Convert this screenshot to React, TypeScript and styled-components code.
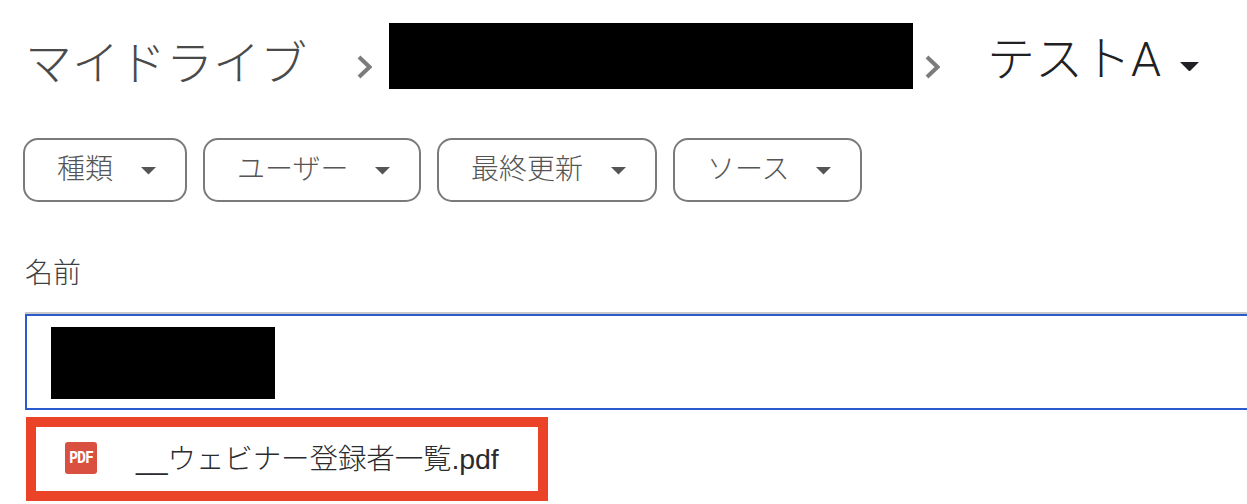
import React from 'react';
import styled, { createGlobalStyle } from 'styled-components';

const GlobalStyle = createGlobalStyle`
  html, body {
    margin: 0;
    padding: 0;
    background: #fff;
    overflow: hidden;
  }
  body {
    font-family: "Noto Sans CJK JP", "Liberation Sans", sans-serif;
  }
`;

const Page = styled.div`
  width: 1247px;
  height: 504px;
  overflow: hidden;
  display: flex;
  flex-direction: column;
`;

const Breadcrumb = styled.div`
  display: flex;
  align-items: center;
  height: 66px;
  margin-top: 23px;
  padding-left: 25px;
`;

const RootCrumb = styled.span`
  font-size: 47px;
  font-weight: 300;
  line-height: 66px;
  margin-top: 8px;
  color: #4a4a4a;
  width: 332px;
  white-space: nowrap;
`;

const Chevron = styled.svg<{ $before: number; $after: number }>`
  width: 15px;
  height: 24px;
  margin: 21px ${p => p.$after}px 0 ${p => p.$before}px;
  flex: none;
`;

const Redacted = styled.div<{ $w: number; $h: number }>`
  width: ${p => p.$w}px;
  height: ${p => p.$h}px;
  background: #000;
  flex: none;
`;

const CurrentCrumb = styled.span`
  font-family: "Roboto", "Noto Sans CJK JP", sans-serif;
  font-size: 48px;
  font-weight: 300;
  line-height: 66px;
  margin: 8px 19px 0 0;
  color: #202124;
  white-space: nowrap;
`;

const Filters = styled.div`
  display: flex;
  gap: 16px;
  margin-top: 49px;
  padding-left: 23px;
`;

const Chip = styled.div<{ $w: number }>`
  box-sizing: border-box;
  width: ${p => p.$w}px;
  height: 64px;
  border: 2px solid #7a7a7a;
  border-radius: 15px;
  display: flex;
  align-items: center;
  justify-content: space-between;
  padding: 0 29px 6px 32px;
  font-size: 28px;
  font-weight: 300;
  color: #555;
`;

const Caret = styled.svg<{ $w: number; $h: number; $top: number }>`
  width: ${p => p.$w}px;
  height: ${p => p.$h}px;
  margin-top: ${p => p.$top}px;
  flex: none;
`;

const ColumnHead = styled.div`
  margin-top: 49px;
  padding-left: 25px;
  font-size: 28px;
  font-weight: 300;
  line-height: 40px;
  color: #3c4043;
`;

const SelectedRow = styled.div`
  box-sizing: border-box;
  margin-top: 21px;
  margin-left: 25px;
  width: 1240px;
  height: 98px;
  border-top: 2px solid #c9c9c9;
`;

const SelectedInner = styled.div`
  box-sizing: border-box;
  height: 96px;
  border: 2px solid #2a5bcd;
  padding: 11px 0 0 24px;
`;

const Highlight = styled.div`
  box-sizing: border-box;
  margin-top: 7px;
  margin-left: 26px;
  width: 522px;
  height: 84px;
  border: 10px solid #eb4328;
  display: flex;
  align-items: center;
  padding-left: 29px;
`;

const PdfBadge = styled.span`
  width: 32px;
  height: 32px;
  margin-bottom: 2px;
  border-radius: 3px;
  background: #da5040;
  color: #fff;
  font-family: "DejaVu Sans Mono", "Liberation Mono", monospace;
  font-size: 15px;
  font-weight: 700;
  letter-spacing: -1px;
  display: flex;
  align-items: center;
  justify-content: center;
  flex: none;
`;

const FileName = styled.span`
  margin: 0 0 5px 39px;
  font-family: "Liberation Sans", "Noto Sans CJK JP", sans-serif;
  font-size: 28.5px;
  font-weight: 300;
  letter-spacing: -0.1px;
  color: #2a2b2e;
  white-space: nowrap;
`;

const ChevronIcon = ({ before, after }: { before: number; after: number }) => (
  <Chevron $before={before} $after={after} viewBox="0 0 15 24">
    <path d="M2 2 L12.5 12 L2 22" fill="none" stroke="#7c7c7c" strokeWidth="4" />
  </Chevron>
);

const CaretIcon = ({ w, h, top, color }: { w: number; h: number; top: number; color: string }) => (
  <Caret $w={w} $h={h} $top={top} viewBox="0 0 10 5">
    <path d="M0 0 L10 0 L5 5 Z" fill={color} />
  </Caret>
);

const filters = [
  { label: '種類', width: 164 },
  { label: 'ユーザー', width: 218 },
  { label: '最終更新', width: 220 },
  { label: 'ソース', width: 189 },
];

export default function App() {
  return (
    <>
      <GlobalStyle />
      <Page>
        <Breadcrumb>
          <RootCrumb>マイドライブ</RootCrumb>
          <ChevronIcon before={0} after={17} />
          <Redacted $w={524} $h={66} />
          <ChevronIcon before={12} after={47} />
          <CurrentCrumb>テストA</CurrentCrumb>
          <CaretIcon w={19} h={9.5} top={21} color="#202124" />
        </Breadcrumb>
        <Filters>
          {filters.map(f => (
            <Chip key={f.label} $w={f.width}>
              {f.label}
              <CaretIcon w={15} h={7.5} top={8} color="#555" />
            </Chip>
          ))}
        </Filters>
        <ColumnHead>名前</ColumnHead>
        <SelectedRow>
          <SelectedInner>
            <Redacted $w={224} $h={72} />
          </SelectedInner>
        </SelectedRow>
        <Highlight>
          <PdfBadge>PDF</PdfBadge>
          <FileName>__ウェビナー登録者一覧.pdf</FileName>
        </Highlight>
      </Page>
    </>
  );
}
